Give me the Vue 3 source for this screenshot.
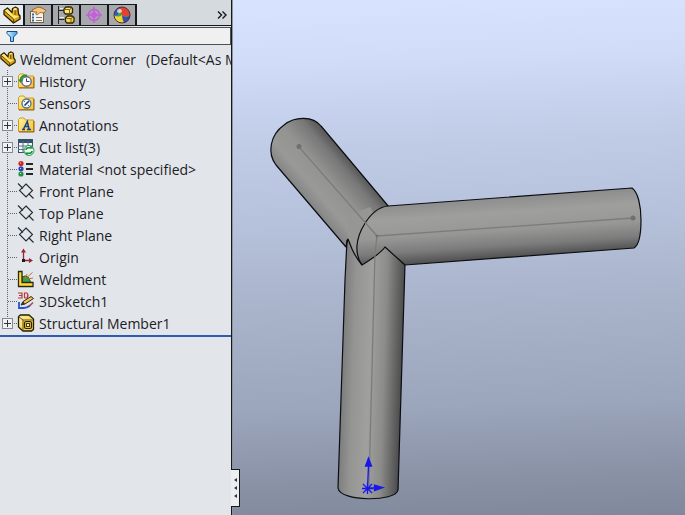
<script setup>
import { ref } from 'vue'

const tabs = [
  { id: 'part', label: 'FeatureManager' },
  { id: 'props', label: 'PropertyManager' },
  { id: 'config', label: 'ConfigurationManager' },
  { id: 'target', label: 'DimXpertManager' },
  { id: 'ball', label: 'DisplayManager' }
]
const activeTab = ref('part')
const filter = ref('')

const nodes = [
  { label: 'History', icon: 'history', expandable: true },
  { label: 'Sensors', icon: 'sensors' },
  { label: 'Annotations', icon: 'annotations', expandable: true },
  { label: 'Cut list(3)', icon: 'cutlist', expandable: true },
  { label: 'Material <not specified>', icon: 'material' },
  { label: 'Front Plane', icon: 'plane' },
  { label: 'Top Plane', icon: 'plane' },
  { label: 'Right Plane', icon: 'plane' },
  { label: 'Origin', icon: 'origin' },
  { label: 'Weldment', icon: 'weldment' },
  { label: '3DSketch1', icon: 'sketch' },
  { label: 'Structural Member1', icon: 'member', expandable: true }
]
</script>

<template>
  <div class="app">
    <svg class="sprite" aria-hidden="true">
      <defs>
        <linearGradient id="gold" x1="0" y1="0" x2="1" y2="1">
          <stop offset="0" stop-color="#fff2a0" />
          <stop offset="1" stop-color="#f2c23a" />
        </linearGradient>
        <linearGradient id="funnel" x1="0" y1="0" x2="1" y2="0">
          <stop offset="0" stop-color="#d8f4ff" />
          <stop offset="1" stop-color="#3f9fe0" />
        </linearGradient>
      </defs>
      <symbol id="part" viewBox="0 0 18 18">
        <path d="M1 4.500L4.500 2L9 6.500L9.500 2.500L12.500 1L15 2.500L15.500 8L17 10V13L10.500 17L1 8.500Z" fill="#d9a21a" stroke="#2c2000" stroke-width="1.300" stroke-linejoin="round" />
        <path d="M1.800 4.800L4.500 3L10.500 9.500L11 9.200L16 10.200L10.800 13Z" fill="#ffea70" />
        <path d="M10.200 3L12.500 1.900L14.200 2.900L12 4.200Z" fill="#fff0a0" />
        <path d="M10.200 3.300L12 4.300V9L10.500 8.500Z" fill="#f2c63e" />
        <path d="M12 4.300V9M1.500 5L10.600 13V16.500" fill="none" stroke="#59400a" />
      </symbol>
      <symbol id="props" viewBox="0 0 18 18">
        <rect x="1.500" y="5.500" width="13" height="11" fill="#f7f4e8" stroke="#79624a" />
        <path d="M3 8.500h2M3 11.500h2M3 14.500h2" stroke="#3265a5" stroke-width="2" />
        <path d="M7 11.500h6M7 14.500h6" stroke="#777" />
        <path d="M3 4L9 1L13 2L17 4.500L15 7L11 6.500L8 9L6.500 8L8 6L4 6Z" fill="#f8c67c" stroke="#87501b" stroke-width=".8" />
      </symbol>
      <symbol id="config" viewBox="0 0 18 18">
        <path d="M1.500 0v18M1.500 4.500h6M1.500 13.500h6" fill="none" stroke="#252525" />
        <path d="M3 2.500h4M3 11.500h4" stroke="#eee" />
        <path d="M7 3L9 1h5l1.500 1.500v4L14 8H8.500L7 6.500ZM8.500 12l2-2h4.500l2 1.500v4L15.500 17H10L8.500 15.500Z" fill="url(#gold)" stroke="#322800" stroke-width="1.300" />
        <path d="M8 3.500h4.500V7M12.500 3.500l2-1.500M9.500 12.500H14V16M14 12.500l2-1.500" fill="none" stroke="#7d620c" />
      </symbol>
      <symbol id="target" viewBox="0 0 18 18">
        <g fill="none" stroke="#c45cdb" stroke-width="1.500">
          <circle cx="9" cy="9" r="5.500" />
          <circle cx="9" cy="9" r="2.200" />
          <path d="M9 1v16M1 9h16" />
        </g>
      </symbol>
      <symbol id="ball" viewBox="0 0 18 18">
        <circle cx="9" cy="9" r="8" fill="#eed62c" />
        <path d="M1 9A8 8 0 0 1 9 1Q7 5 9 9Q5 12 1 9Z" fill="#3aa456" />
        <path d="M1 9A8 8 0 0 1 9 1Q5 4 5 9Q3 10 1 9Z" fill="#315bc0" />
        <path d="M9 1A8 8 0 0 1 17 9Q13 12 9 9Q6 6 6 2Z" fill="#e3422e" />
        <path d="M17 9A8 8 0 0 1 11 17Q9 13 9 9Q13 12 17 9Z" fill="#3451a8" />
        <ellipse cx="6.500" cy="5" rx="2.500" ry="2" fill="#fff" opacity=".7" />
        <circle cx="9" cy="9" r="8" fill="none" stroke="#4c3040" />
      </symbol>
      <symbol id="filter" viewBox="0 0 12 12">
        <path d="M1 1.500h10v2L7.500 7v4.500h-3V7L1 3.500Z" fill="url(#funnel)" stroke="#164b91" />
      </symbol>
      <symbol id="folder" viewBox="0 0 18 18">
        <path d="M1.500 15.500V3.500L3 2h4l1.500 2h8v11.500Z" fill="url(#gold)" stroke="#d39a1c" />
        <path d="M2 16h15V5" fill="none" stroke="#8d6013" />
      </symbol>
      <symbol id="history" viewBox="0 0 18 18">
        <use href="#folder" />
        <circle cx="9.500" cy="9.500" r="4.700" fill="#fff" stroke="#6a6288" stroke-width="1.400" />
        <path d="M9.500 6.500v3h3" fill="none" stroke="#283c82" />
        <path d="M3.500 8.500Q4 3 10 3.500" fill="none" stroke="#229248" stroke-width="2" />
        <path d="M1 7.500h5.500L3.500 11Z" fill="#229248" />
      </symbol>
      <symbol id="sensors" viewBox="0 0 18 18">
        <use href="#folder" />
        <circle cx="9.500" cy="9.500" r="4.500" fill="#eef8ff" stroke="#557189" stroke-width="1.300" />
        <path d="M7.500 11.500L12 7" stroke="#173f73" stroke-width="1.600" />
        <path d="M7 8l1-1M11 12l1-1" stroke="#587080" />
      </symbol>
      <symbol id="annotations" viewBox="0 0 18 18">
        <use href="#folder" />
        <path d="M5 13.500h3M10 13.500h4M6.500 13L10.300 5.500L12 13M8 10.500h3.500" fill="none" stroke="#174391" stroke-width="1.500" />
      </symbol>
      <symbol id="cutlist" viewBox="0 0 18 18">
        <rect x="1.500" y="1.500" width="14" height="13" fill="#f5f8fa" stroke="#34506a" />
        <path d="M1 3h15" stroke="#34506a" stroke-width="4" />
        <path d="M1 8h15M1 11.500h15M6 3v12M11 3v12" stroke="#59718a" />
        <circle cx="12" cy="12.500" r="5" fill="#e9ffef" stroke="#249a4c" />
        <path d="M9 12q0-3 5-2M15 13q0 3-5 2" fill="none" stroke="#16863b" stroke-width="1.600" />
        <path d="M12.500 8.500h3v3ZM11.500 16.500h-3v-3Z" fill="#16863b" />
      </symbol>
      <symbol id="material" viewBox="0 0 18 18">
        <circle cx="4" cy="3.500" r="2.600" fill="#cf2525" />
        <circle cx="4" cy="8.800" r="2.600" fill="#2645bd" />
        <circle cx="4" cy="14" r="2.600" fill="#239343" />
        <path d="M3 3h1M3 8.500h1M3 13.500h1" stroke="#fff" opacity=".8" />
        <path d="M9 4H16M9 9H16M9 14H16" stroke="#252525" stroke-width="2" />
      </symbol>
      <symbol id="plane" viewBox="0 0 18 18">
        <path d="M9 2L15.500 8.500L9 15L2.500 8.500ZM1 1.500L6 6.500M11.500 11.500L16.500 16.500" fill="none" stroke="#202b32" stroke-width="1.100" />
      </symbol>
      <symbol id="origin" viewBox="0 0 18 18">
        <path d="M6.500 3v11M5 12.500h9" fill="none" stroke="#98263a" stroke-width="1.300" />
        <path d="M6.500 0.500L4 4.500h5ZM16 12.500l-4-2.500v5Z" fill="#98263a" />
        <rect x="5" y="11" width="3" height="3" fill="#1b1b1b" />
      </symbol>
      <symbol id="weldment" viewBox="0 0 18 18">
        <path d="M5 7Q8 5 11 7L14 12.500H5Z" fill="#38a04d" stroke="#16622c" />
        <path d="M1.500 1.500h3.500v11h11v4h-14.500Z" fill="#ffda3d" stroke="#2c280f" stroke-width="1.300" />
        <path d="M8 9L15.500 2.500M8 8L10 4M11 9l5-1" stroke="#c96d2e" />
      </symbol>
      <symbol id="sketch" viewBox="0 0 18 18">
        <path d="M1 1h4v5H1M2 3.500h3M7.500 .5V6M7.500 1H10Q12 3.500 10 6H7.500" fill="none" stroke="#b93734" stroke-width="1.200" />
        <path d="M2 10v6h5Q10 16 13 13.500" fill="none" stroke="#2553d6" stroke-width="1.800" />
        <path d="M4 13L6 9.500L14 4.500L16.500 6.500L8 12Z" fill="#f4c951" stroke="#272727" />
        <path d="M4 13l2.500-3.500L8 12Z" fill="#333" />
        <path d="M12 14.500l4-4" stroke="#a8443b" stroke-width="1.400" />
      </symbol>
      <symbol id="member" viewBox="0 0 18 18">
        <path d="M1.500 2.500L3.500 1H12l4.500 4v10.500l-2 1.500H6l-4.500-4Z" fill="url(#gold)" stroke="#241e07" stroke-width="1.300" />
        <path d="M1.500 2.500L6 6h10M6 6V17" fill="none" stroke="#65500d" />
        <rect x="7.500" y="7.500" width="7" height="7" rx="1.500" fill="#eebf30" stroke="#2a230b" stroke-width="1.200" />
        <rect x="9.500" y="9.500" width="3" height="3" fill="#fff2b0" stroke="#433710" />
      </symbol>
    </svg>

    <aside class="panel">
      <nav class="tabs" aria-label="Manager tabs">
        <button
          v-for="tab in tabs"
          :key="tab.id"
          type="button"
          class="tab"
          :class="{ active: tab.id === activeTab }"
          :aria-label="tab.label"
          @click="activeTab = tab.id"
        >
          <svg class="icon"><use :href="'#' + tab.id" /></svg>
        </button>
        <button type="button" class="more" aria-label="More tabs">
          <svg class="chevrons" viewBox="0 0 10 8"><path d="M1 0.5L4.5 4L1 7.5M5.5 0.5L9 4L5.5 7.5" /></svg>
        </button>
      </nav>
      <label class="filter">
        <svg class="funnel"><use href="#filter" /></svg>
        <input v-model="filter" type="text" aria-label="Filter tree">
      </label>
      <div class="tree">
        <div class="root">
          <svg class="root-icon"><use href="#part" /></svg>
          <span>Weldment Corner</span>
          <span class="configuration">(Default&lt;As Machined&gt;)</span>
        </div>
        <ul class="nodes">
          <li v-for="node in nodes" :key="node.label" class="node">
            <span class="branch">
              <button v-if="node.expandable" type="button" class="expander" :aria-label="'Expand ' + node.label"></button>
            </span>
            <svg class="icon"><use :href="'#' + node.icon" /></svg>
            <span class="label">{{ node.label }}</span>
          </li>
        </ul>
      </div>
      <button type="button" class="collapse" aria-label="Collapse panel">
        <i></i><i></i><i></i>
      </button>
    </aside>

    <main class="viewport">
      <svg class="model" viewBox="233 0 452 515" preserveAspectRatio="xMinYMin slice" role="img" aria-label="Three tubes joined at a corner">
        <defs>
          <linearGradient id="tubeLeft" gradientUnits="userSpaceOnUse" x1="352" y1="166" x2="308" y2="204">
            <stop offset="0" stop-color="#5d5e5d" />
            <stop offset=".14" stop-color="#777877" />
            <stop offset=".45" stop-color="#939492" />
            <stop offset=".75" stop-color="#999a98" />
            <stop offset="1" stop-color="#828382" />
          </linearGradient>
          <linearGradient id="tubeRight" gradientUnits="userSpaceOnUse" x1="508" y1="197" x2="512" y2="257">
            <stop offset="0" stop-color="#8c8d8c" />
            <stop offset=".25" stop-color="#9fa09e" />
            <stop offset=".55" stop-color="#979896" />
            <stop offset=".8" stop-color="#7b7c7b" />
            <stop offset="1" stop-color="#505150" />
          </linearGradient>
          <linearGradient id="tubeDown" gradientUnits="userSpaceOnUse" x1="342" y1="370" x2="402" y2="372">
            <stop offset="0" stop-color="#7c7d7c" />
            <stop offset=".18" stop-color="#949593" />
            <stop offset=".45" stop-color="#a0a19f" />
            <stop offset=".7" stop-color="#8b8c8a" />
            <stop offset="1" stop-color="#4a4b4a" />
          </linearGradient>
        </defs>
        <g stroke="#0b0d12" stroke-width="1.200" stroke-linejoin="round">
          <path d="M346 247L276 165C267 153 270 135 284 125C295 116 313 116 321 126L389 207L378 250Z" fill="url(#tubeLeft)" />
          <path d="M347 240L345 280L338 488C340 502 396 502 398 490L405 264L386 235Z" fill="url(#tubeDown)" />
          <path d="M348 240L359 259C354 245 360 224 374 214L370 207L348 216Z" fill="#969795" stroke="none" />
          <path d="M388 206L632 188C638 192 641 206 641 220C641 235 639 245 634 248L405 265L385 247Q380 254 362 265C354 254 356 238 364 225C371 213 379 207 388 206Z" fill="url(#tubeRight)" />
          <path d="M346 246L348 239L352 249Q356 258 362 265" fill="none" />
        </g>
        <g fill="none" stroke="#7c7d7b" stroke-width="1.300">
          <path d="M299 147L377 236L633 218" />
          <path d="M377 236L375 253L369 486" />
        </g>
        <g fill="#70716f">
          <circle cx="299" cy="146.500" r="2.500" />
          <circle cx="377" cy="236" r="1.500" />
          <circle cx="633" cy="218" r="2.500" />
        </g>
        <g fill="none" stroke="#1717ed" stroke-width="1.300">
          <path d="M367.500 488L368.500 466M368 488H376M363 484L372 493M363 493L372 484M362 488.500H373M367.500 483V494" />
          <path d="M368.500 458L365.500 466H371.500ZM383 487.500L374.500 485V490.500Z" fill="#1717ed" />
        </g>
      </svg>
    </main>
  </div>
</template>

<style>
html,
body {
  margin: 0;
}
</style>

<style scoped>
.app {
  display: flex;
  height: 100vh;
  overflow: hidden;
  color: #1c2024;
  font-family: "Open Sans", "Noto Sans", sans-serif;
  font-size: 14px;
}

.sprite {
  position: absolute;
  width: 0;
  height: 0;
}

button {
  margin: 0;
  padding: 0;
  border: 0;
  background: none;
}

.panel {
  position: relative;
  z-index: 1;
  display: flex;
  flex-direction: column;
  flex: 0 0 231px;
  min-width: 0;
  border-right: 1px solid #15191e;
  background: #e2e6eb;
}

.tabs {
  display: flex;
  height: 26px;
  padding-top: 4px;
  box-sizing: border-box;
  border-bottom: 1px solid #15191e;
  background: #d5dade;
}

.tab {
  display: flex;
  flex: 0 0 28px;
  align-items: center;
  justify-content: center;
  box-sizing: border-box;
  border-top: 1px solid #15191e;
  border-right: 2px solid #15191e;
  background: #a6a8ab;
}

.tab.active {
  flex-basis: 25px;
  background: #e8ebef;
}

.icon {
  flex: none;
  width: 18px;
  height: 18px;
}

.more {
  display: flex;
  margin-left: auto;
  padding: 0 4px;
  align-items: center;
}

.chevrons {
  width: 10px;
  height: 8px;
  fill: none;
  stroke: #15191e;
  stroke-width: 1.4;
}

.filter {
  display: flex;
  align-items: center;
  height: 18px;
  padding-left: 6px;
  gap: 4px;
  box-sizing: border-box;
  border: 1px solid #4c5156;
  border-left: 0;
  margin-top: 1px;
  background: #f0f0f1;
}

.funnel {
  flex: none;
  width: 12px;
  height: 12px;
}

.filter input {
  flex: 1;
  min-width: 0;
  height: 16px;
  padding: 0;
  border: 0;
  outline: 0;
  background: transparent;
  font: inherit;
}

.tree {
  padding: 3px 0 1px;
  border-bottom: 2px solid #2c5cae;
  overflow: hidden;
}

.root,
.node {
  display: flex;
  align-items: center;
  height: 22px;
  white-space: nowrap;
}

.root {
  gap: 4px;
}

.configuration {
  padding-left: 6px;
}

.root-icon {
  flex: none;
  width: 16px;
  height: 16px;
}

.nodes {
  margin: 0;
  padding: 0;
  list-style: none;
}

.node .label {
  padding-left: 4px;
}

.branch {
  display: grid;
  flex: none;
  align-items: center;
  width: 15px;
  height: 22px;
  padding-left: 2px;
  background:
    repeating-linear-gradient(180deg, #5f656c 0 1px, transparent 1px 2px) 7px 0 / 1px 22px no-repeat,
    repeating-linear-gradient(90deg, #5f656c 0 1px, transparent 1px 2px) 8px 11px / 9px 1px no-repeat;
}

.node:last-child .branch {
  background-size: 1px 11px, 9px 1px;
}

.expander {
  width: 11px;
  height: 11px;
  border: 1px solid #858b91;
  background:
    linear-gradient(#30353a, #30353a) center / 7px 1px no-repeat,
    linear-gradient(#30353a, #30353a) center / 1px 7px no-repeat,
    #f1f2f3;
}

.viewport {
  flex: 1;
  min-width: 0;
  border-left: 1px solid #8f949c;
  background: linear-gradient(178deg, #d8e3ff 0%, #d0dcf8 12%, #c0cbe6 28%, #b6c1db 42%, #a8b3ca 60%, #9ba5bb 78%, #8991a5 92%, #80889b 100%);
}

.model {
  display: block;
  width: 100%;
  height: 100%;
}

.collapse {
  position: absolute;
  right: -9px;
  bottom: 8px;
  display: flex;
  flex-direction: column;
  align-items: center;
  justify-content: center;
  gap: 4px;
  width: 9px;
  height: 38px;
  border: 1px solid #15191e;
  border-left: 0;
  background: #eceff2;
}

.collapse i {
  border: 2px solid transparent;
  border-right: 3px solid #30353a;
  border-left: 0;
}
</style>
